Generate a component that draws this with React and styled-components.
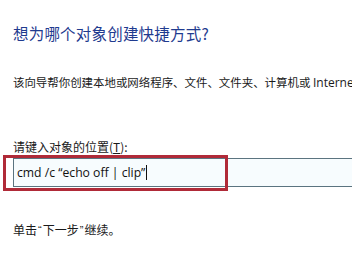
import React from "react";
import styled, { createGlobalStyle } from "styled-components";

const Global = createGlobalStyle`
  html, body { margin: 0; padding: 0; background: #fff; }
  body { width: 352px; height: 269px; overflow: hidden; font-family: "Noto Sans CJK SC", "Noto Sans", sans-serif; }
`;

const Page = styled.div`
  width: 352px;
  height: 269px;
  overflow: hidden;
  background: #fff;
  padding: 22px 0 0 13px;
  box-sizing: border-box;
  white-space: nowrap;
`;

const Title = styled.h1`
  margin: 0;
  font-weight: 400;
  font-size: 15.5px;
  line-height: 22px;
  color: #1f3b8f;
  letter-spacing: 0.2px;
`;

const Text = styled.p`
  margin: ${(p) => p.$mt}px 0 0 0;
  font-size: ${(p) => p.$size || 12}px;
  line-height: 16px;
  color: #1a1a1a;
  overflow: hidden;
`;

const Latin = styled.span`
  font-family: "Open Sans", "Noto Sans", sans-serif;
  font-size: 12px;
`;

const Quote = styled.span`
  font-family: "Liberation Sans", sans-serif;
  font-size: 11px;
  margin: 0 1px;
  vertical-align: 1px;
`;

const Access = styled.span`
  text-decoration: underline;
  text-underline-offset: 1px;
`;

const Field = styled.div`
  position: relative;
  margin-top: 3px;
  height: 27px;
  border: 1px solid #5b7480;
  border-right: none;
  background: #f7fcfe;
  display: flex;
  align-items: center;
  padding-left: 3px;
`;

const Value = styled.span`
  font-family: "Open Sans", "Noto Sans", sans-serif;
  font-size: 12.2px;
  color: #111;
`;

const Caret = styled.span`
  display: inline-block;
  width: 1px;
  height: 15px;
  background: #111;
  margin-left: 1px;
`;

const Highlight = styled.div`
  position: absolute;
  left: -11px;
  top: -4px;
  width: 219px;
  height: 30px;
  border: 3px solid #b02a38;
  pointer-events: none;
`;

export default function App() {
  return (
    <>
      <Global />
      <Page>
        <Title>想为哪个对象创建快捷方式?</Title>
        <Text $mt={30} $size={11.45}>
          该向导帮你创建本地或网络程序、文件、文件夹、计算机或 <Latin>Internet</Latin>
        </Text>
        <Text $mt={48}>
          请键入对象的位置(<Access>T</Access>):
        </Text>
        <Field>
          <Value>cmd /c “echo off | clip”</Value>
          <Caret />
          <Highlight />
        </Field>
        <Text $mt={35}>
          单击<Quote>“</Quote>下一步<Quote>”</Quote>继续。
        </Text>
      </Page>
    </>
  );
}
